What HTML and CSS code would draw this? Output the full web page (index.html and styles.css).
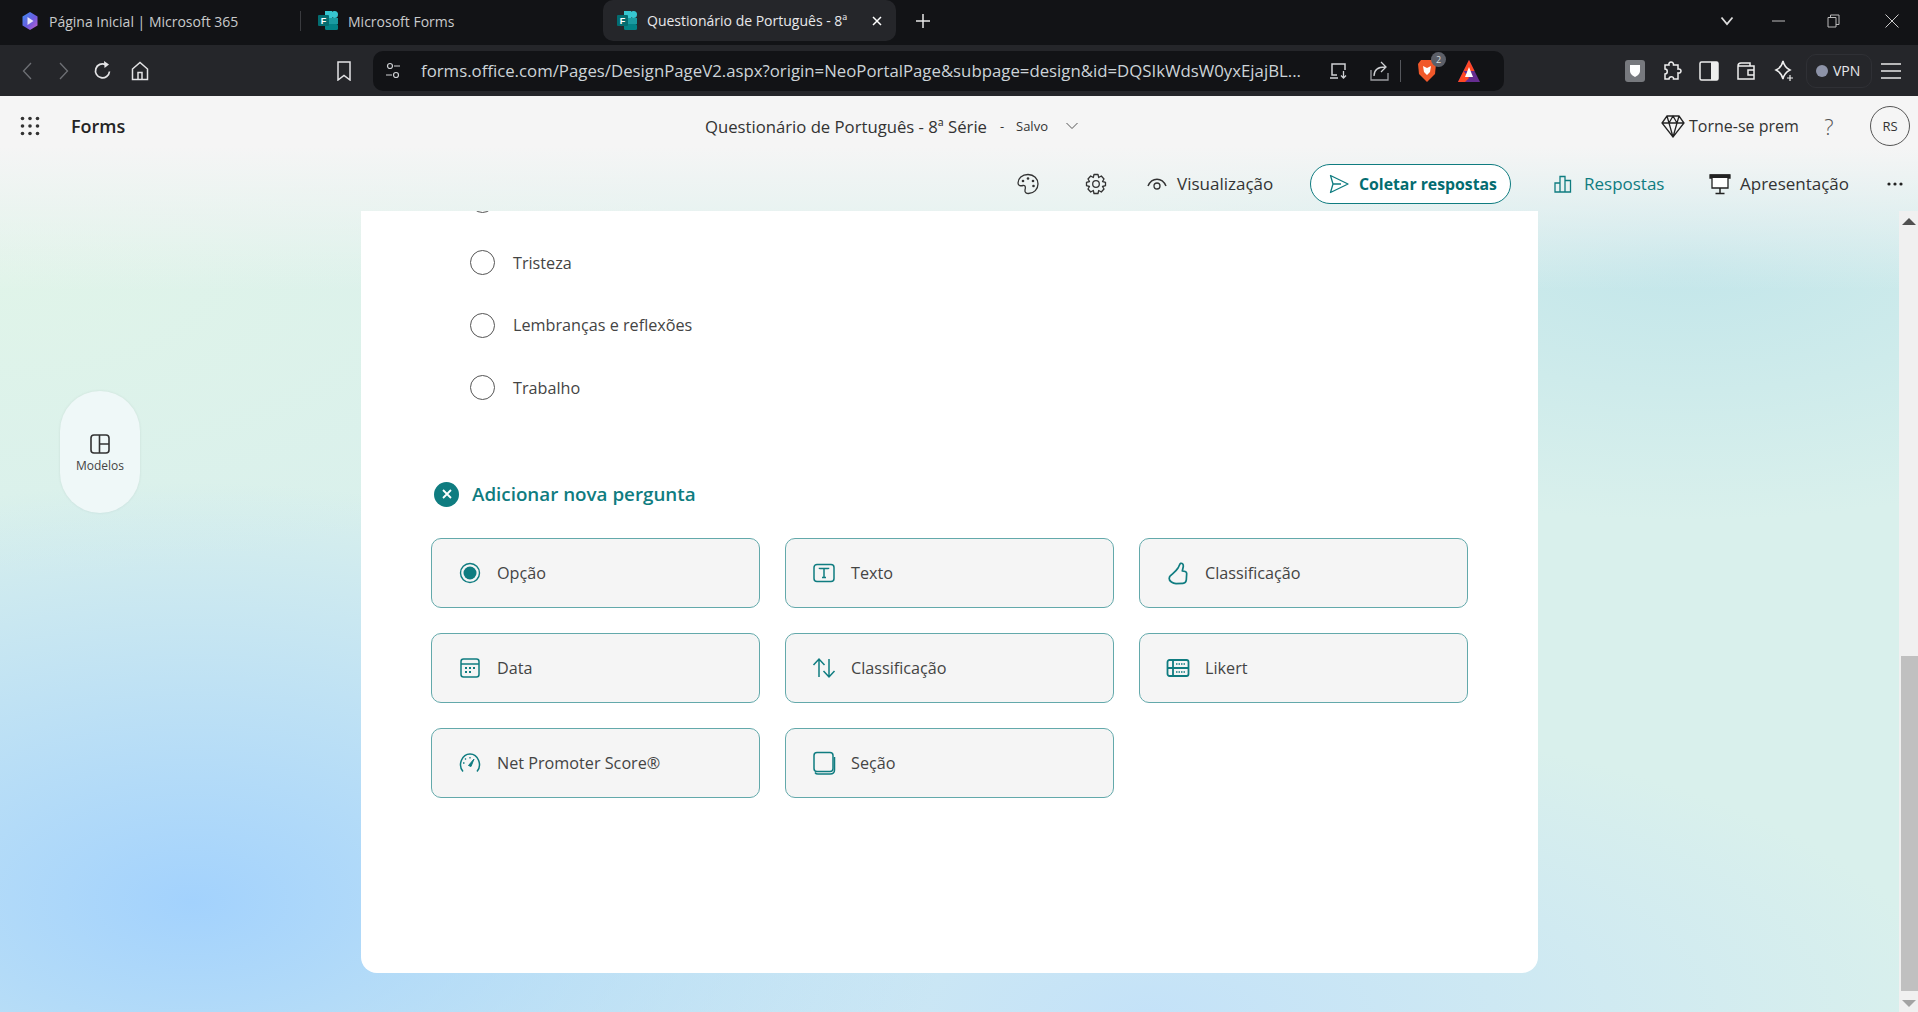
FILE: index.html
```html
<!DOCTYPE html>
<html lang="pt-BR">
<head>
  <meta charset="UTF-8">
  <title>Questionário de Português - 8ª Série</title>
  <link rel="stylesheet" href="styles.css">
</head>
<body>
  <!-- Tabs -->
  <div class="tabstrip">
    <div class="tab tab-first">
      <svg width="18" height="20" viewBox="0 0 18 20"><defs><linearGradient id="m365" x1="0" y1="0" x2="1" y2="1"><stop offset="0" stop-color="#3f8cf0"/><stop offset="0.55" stop-color="#6a5be0"/><stop offset="1" stop-color="#c85fc8"/></linearGradient></defs><path d="M9 1 16.500 5.500V14.500L9 19 1.500 14.500V5.500Z" fill="url(#m365)"/><path d="M6.500 6 12.500 10 6.500 14Z" fill="#e8e4f8"/></svg>
      <span>Página Inicial | Microsoft 365</span>
    </div>
    <div class="tab-sep"></div>
    <div class="tab tab-second">
      <svg width="20" height="20" viewBox="0 0 20 20">
        <rect x="7" y="0" width="7" height="7" fill="#37c6d0"/><circle cx="16.500" cy="3.500" r="3.500" fill="#37c6d0"/><rect x="7" y="7" width="13" height="6" fill="#1a9ba1"/><rect x="7" y="13" width="13" height="6" rx="1.500" fill="#038387"/><rect x="0" y="4" width="11" height="11" rx="1" fill="#036c70"/>
        <text x="5.500" y="13" font-size="9" font-family="Liberation Sans" font-weight="700" text-anchor="middle" fill="#fff">F</text>
      </svg>
      <span>Microsoft Forms</span>
    </div>
    <div class="tab tab-active">
      <svg width="20" height="20" viewBox="0 0 20 20">
        <rect x="7" y="0" width="7" height="7" fill="#37c6d0"/><circle cx="16.500" cy="3.500" r="3.500" fill="#37c6d0"/><rect x="7" y="7" width="13" height="6" fill="#1a9ba1"/><rect x="7" y="13" width="13" height="6" rx="1.500" fill="#038387"/><rect x="0" y="4" width="11" height="11" rx="1" fill="#036c70"/>
        <text x="5.500" y="13" font-size="9" font-family="Liberation Sans" font-weight="700" text-anchor="middle" fill="#fff">F</text>
      </svg>
      <span class="tab-title">Questionário de Português - 8ª</span>
      <svg class="tab-close" width="10" height="10" viewBox="0 0 10 10"><path d="M1 1 9 9M9 1 1 9" stroke="#fff" stroke-width="1.500"/></svg>
    </div>
    <svg class="tab-new" width="14" height="14" viewBox="0 0 14 14"><path d="M7 0V14M0 7H14" stroke="#e8e8e8" stroke-width="1.500"/></svg>
    <div class="win-controls">
      <svg class="win-list" width="14" height="10" viewBox="0 0 14 10"><path d="M1.500 1.500 7 8 12.500 1.500" fill="none" stroke="#ddd" stroke-width="1.800"/></svg>
      <svg class="win-min" width="13" height="2" viewBox="0 0 13 2"><path d="M0 1H13" stroke="#bbb" stroke-width="1"/></svg>
      <svg class="win-max" width="13" height="14" viewBox="0 0 13 14"><path d="M1 3.500H9V13H1ZM3.500 3.500V1H12V10.500H9" fill="none" stroke="#bbb"/></svg>
      <svg class="win-close" width="14" height="14" viewBox="0 0 14 14"><path d="M.5.500 13.500 13.500M13.500.500 .5 13.500" stroke="#ccc"/></svg>
    </div>
  </div>

  <!-- Toolbar -->
  <div class="toolbar">
    <svg class="tb-back" width="10" height="18" viewBox="0 0 10 18"><path d="M9 1 1.500 9 9 17" fill="none" stroke="#6e7075" stroke-width="1.300"/></svg>
    <svg class="tb-forward" width="10" height="18" viewBox="0 0 10 18"><path d="M1 1 8.500 9 1 17" fill="none" stroke="#6e7075" stroke-width="1.300"/></svg>
    <svg class="tb-reload" width="20" height="20" viewBox="0 0 20 20"><path d="M16.500 10.500A7 7 0 1 1 12.500 3.500" fill="none" stroke="#e4e4e6" stroke-width="1.700"/><path d="M11 0 16 3.500 11.500 7Z" fill="#e4e4e6"/></svg>
    <svg class="tb-home" width="18" height="20" viewBox="0 0 18 20"><path d="M1.500 8 9 1.500 16.500 8V18.500H1.500ZM7 18.500V11.500H11V18.500" fill="none" stroke="#e4e4e6" stroke-width="1.500"/></svg>
    <svg class="tb-bookmark" width="14" height="20" viewBox="0 0 14 20"><path d="M1 1H13V19L7 14.500 1 19Z" fill="none" stroke="#e4e4e6" stroke-width="1.500"/></svg>
    <div class="addressbar">
      <svg class="addr-tune" width="14" height="18" viewBox="0 0 14 18"><g fill="none" stroke="#cfd1d4" stroke-width="1.200"><circle cx="4" cy="4" r="2.500"/><path d="M8 4H14M0 13H6"/><circle cx="10" cy="13" r="2.500"/></g></svg>
      <span class="url">forms.office.com/Pages/DesignPageV2.aspx?origin=NeoPortalPage&amp;subpage=design&amp;id=DQSIkWdsW0yxEjajBL...</span>
      <svg class="addr-device" width="20" height="20" viewBox="0 0 20 20"><path d="M8 14H3V3H16V9M1 17H9" fill="none" stroke="#cfd1d4" stroke-width="1.500"/><path d="M14.500 10V17M12 14.500 14.500 17 17 14.500" fill="none" stroke="#cfd1d4" stroke-width="1.300"/></svg>
      <svg class="addr-share" width="20" height="22" viewBox="0 0 20 22"><path d="M1 10V20H18V13" fill="none" stroke="#9a9ca0" stroke-width="1.300"/><path d="M4 16C4 10 8 7 15 7M11 2 16 7 11 12" fill="none" stroke="#cfd1d4" stroke-width="1.300"/></svg>
      <div class="addr-sep"></div>
      <div class="brave">
        <svg width="20" height="24" viewBox="0 0 20 24"><path d="M4 1H16L19 5 18 15 10 23 2 15 1 5Z" fill="#f1582a"/><path d="M6 7 10 9 14 7 13 13 10 16 7 13Z" fill="#fff"/></svg>
        <span class="brave-badge">2</span>
      </div>
      <svg class="bat" width="24" height="24" viewBox="0 0 24 24"><path d="M12 1 23 23H1Z" fill="#662d91"/><path d="M12 1 17.500 12H6.500Z" fill="#ff4724"/><path d="M1 23 6.500 12 12 19 8 23Z" fill="#ff4724"/><path d="M12 8 16 18H8Z" fill="#fff"/></svg>
    </div>
    <div class="ext-shield"><svg width="12" height="14" viewBox="0 0 12 14"><path d="M1 1H11V7C11 10 8 12 6 13 4 12 1 10 1 7Z" fill="#fff"/></svg></div>
    <svg class="ext-puzzle" width="20" height="22" viewBox="0 0 20 22"><path d="M3 5H7C6 1 12 1 11.500 5H16V9C20 8 20 14 16 13V19H11.500C12 16 7 16 7 19H3V14C6 14 6 9 3 9Z" fill="none" stroke="#eee" stroke-width="1.500"/></svg>
    <svg class="ext-panel" width="20" height="20" viewBox="0 0 20 20"><rect x="1" y="1" width="18" height="18" rx="1.500" fill="none" stroke="#eee" stroke-width="1.500"/><rect x="12" y="1" width="7" height="18" fill="#eee"/></svg>
    <svg class="ext-wallet" width="20" height="20" viewBox="0 0 20 20"><path d="M2 5C2 2 4 2 5 2H14V5M2 5V18H18V5H2" fill="none" stroke="#eee" stroke-width="1.500"/><path d="M18 9H12V14H18" fill="none" stroke="#eee" stroke-width="1.500"/></svg>
    <svg class="ext-star" width="20" height="22" viewBox="0 0 20 22"><path d="M9 1C10 6 12 8 16 10 12 12 10 14 9 19 8 14 6 12 2 10 6 8 8 6 9 1Z" fill="none" stroke="#eee" stroke-width="1.500"/><path d="M16 15V21M13 18H19" stroke="#eee" stroke-width="1.200"/></svg>
    <div class="vpn"><span class="vpn-dot"></span><span>VPN</span></div>
    <svg class="tb-menu" width="20" height="16" viewBox="0 0 20 16"><path d="M0 1H20M0 8H20M0 15H20" stroke="#e8e8e8" stroke-width="1.500"/></svg>
  </div>

  <div class="page">
    <header class="topbar">
      <svg class="waffle" width="20" height="20" viewBox="0 0 20 20"><g fill="#333"><circle cx="2.500" cy="2.500" r="1.800"/><circle cx="10" cy="2.500" r="1.800"/><circle cx="17.500" cy="2.500" r="1.800"/><circle cx="2.500" cy="10" r="1.800"/><circle cx="10" cy="10" r="1.800"/><circle cx="17.500" cy="10" r="1.800"/><circle cx="2.500" cy="17.500" r="1.800"/><circle cx="10" cy="17.500" r="1.800"/><circle cx="17.500" cy="17.500" r="1.800"/></g></svg>
      <div class="brand">Forms</div>
      <div class="doc-title">Questionário de Português - 8ª Série</div>
      <div class="doc-dash">-</div>
      <div class="doc-saved">Salvo</div>
      <svg class="doc-chevron" width="12" height="8" viewBox="0 0 12 8"><path d="M.5 1 6 6.500 11.500 1" fill="none" stroke="#555" stroke-width="1"/></svg>
      <svg class="premium-icon" width="24" height="24" viewBox="0 0 24 24"><path d="M6 2H18L23 9 12 23 1 9ZM1 9H23M8 9 12 23 16 9 12 2 8 9M6 2 8 9M18 2 16 9" fill="none" stroke="#222" stroke-width="1.300"/></svg>
      <div class="premium-text">Torne-se prem</div>
      <div class="help">?</div>
      <div class="avatar">RS</div>
    </header>

    <nav class="commands">
      <svg class="cmd-palette" width="22" height="22" viewBox="0 0 22 22"><path d="M11 1.500C5 1.500 1 5.500 1 10C1 13 4 13 6 12.500 9 12 8.500 15 8 17 7.500 19.500 9.500 20.500 11.500 20.500 17 20.500 21 16 21 11 21 5.500 17 1.500 11 1.500Z" fill="none" stroke="#333" stroke-width="1.300"/><g fill="#333"><circle cx="6" cy="8" r="1.300"/><circle cx="11" cy="5.500" r="1.300"/><circle cx="16" cy="8" r="1.300"/><circle cx="16.500" cy="13" r="1.300"/></g></svg>
      <svg class="cmd-gear" width="22" height="22" viewBox="0 0 22 22"><path d="M9 1.500H13L13.700 4.500 16.300 3 19 6 17.500 8.500 20.500 9.300V12.700L17.500 13.500 19 16 16.300 19 13.700 17.500 13 20.500H9L8.300 17.500 5.700 19 3 16 4.500 13.500 1.500 12.700V9.300L4.500 8.500 3 6 5.700 3 8.300 4.500Z" fill="none" stroke="#333" stroke-width="1.300" stroke-linejoin="round"/><circle cx="11" cy="11" r="3.300" fill="none" stroke="#333" stroke-width="1.300"/></svg>
      <svg class="cmd-eye" width="20" height="14" viewBox="0 0 20 14"><path d="M1 9C5 0 15 0 19 9" fill="none" stroke="#333" stroke-width="1.500"/><circle cx="10" cy="9" r="3" fill="none" stroke="#333" stroke-width="1.300"/></svg>
      <span class="cmd-preview">Visualização</span>
      <button class="collect">
        <svg width="20" height="20" viewBox="0 0 20 20"><path d="M1.500 1.500 19 10 1.500 18.500 4 10ZM4 10H12" fill="none" stroke="#0f7c80" stroke-width="1.300" stroke-linejoin="round"/></svg>
        <span>Coletar respostas</span>
      </button>
      <svg class="cmd-chart" width="18" height="18" viewBox="0 0 18 18"><path d="M1 8H6V17H1ZM6 1.500H11V17H6ZM11 5.500H16.500V17H11Z" fill="none" stroke="#0f7c80" stroke-width="1.300"/></svg>
      <span class="cmd-answers">Respostas</span>
      <svg class="cmd-present" width="22" height="22" viewBox="0 0 22 22"><path d="M1 2H21V5H19V15H3V5H1Z" fill="#fff" stroke="#222" stroke-width="1.300"/><rect x="1" y="1.500" width="20" height="3.500" fill="#222"/><path d="M11 15V20M6.500 20.500H15.500" stroke="#222" stroke-width="1.500"/></svg>
      <span class="cmd-presentation">Apresentação</span>
      <svg class="cmd-more" width="16" height="4" viewBox="0 0 16 4"><g fill="#222"><circle cx="2" cy="2" r="1.600"/><circle cx="8" cy="2" r="1.600"/><circle cx="14" cy="2" r="1.600"/></g></svg>
    </nav>

    <div class="content">
      <aside class="rail">
        <svg width="20" height="20" viewBox="0 0 20 20"><rect x="1" y="1" width="18" height="18" rx="3" fill="none" stroke="#333" stroke-width="1.600"/><path d="M9.500 1V19M9.500 10H19" stroke="#333" stroke-width="1.600"/></svg>
        <span>Modelos</span>
      </aside>

      <main class="card">
        <ul class="options">
          <li><span class="radio"></span></li>
          <li><span class="radio"></span><span>Tristeza</span></li>
          <li><span class="radio"></span><span>Lembranças e reflexões</span></li>
          <li><span class="radio"></span><span>Trabalho</span></li>
        </ul>

        <div class="add-head">
          <span class="add-close"><svg width="10" height="10" viewBox="0 0 10 10"><path d="M1 1 9 9M9 1 1 9" stroke="#fff" stroke-width="1.800"/></svg></span>
          <span>Adicionar nova pergunta</span>
        </div>

        <div class="types">
          <div class="type">
            <svg width="24" height="24" viewBox="0 0 24 24"><circle cx="12" cy="12" r="9.500" fill="none" stroke="#0f7c80" stroke-width="1.400"/><circle cx="12" cy="12" r="6.500" fill="#0f7c80"/></svg>
            <span>Opção</span>
          </div>
          <div class="type">
            <svg width="24" height="24" viewBox="0 0 24 24"><rect x="2" y="3.500" width="20" height="17" rx="3" fill="none" stroke="#0f7c80" stroke-width="1.500"/><path d="M7.500 8V7.500H16.500V8M12 7.500V16.500M10 16.500H14" fill="none" stroke="#0f7c80" stroke-width="1.500"/></svg>
            <span>Texto</span>
          </div>
          <div class="type">
            <svg width="24" height="24" viewBox="0 0 24 24"><path d="M3.700 15.500C6 13 10 10.500 12 7 13 5.500 13.500 3 14.700 2.300 16.500 2 17.500 3.500 17.300 5.500L16.300 10C18 10 20.500 10.500 20.700 12.500L20.300 19C20 21.500 19 22.200 17 22.300L10 22.700C7 22.600 3 20 3.200 17.500Z" fill="none" stroke="#0f7c80" stroke-width="1.700" stroke-linejoin="round"/></svg>
            <span>Classificação</span>
          </div>
          <div class="type">
            <svg width="24" height="24" viewBox="0 0 24 24"><rect x="3" y="3" width="18" height="18" rx="2.500" fill="none" stroke="#0f7c80" stroke-width="1.500"/><path d="M3 8H21" stroke="#0f7c80" stroke-width="1.500"/><g fill="#0f7c80"><rect x="7" y="11" width="2" height="2"/><rect x="11" y="11" width="2" height="2"/><rect x="15" y="11" width="2" height="2"/><rect x="7" y="15" width="2" height="2"/><rect x="11" y="15" width="2" height="2"/></g></svg>
            <span>Data</span>
          </div>
          <div class="type">
            <svg width="24" height="24" viewBox="0 0 24 24"><path d="M7 21V3M1.500 9 7 3 12.500 9M17 3V21M11.500 15 17 21 22.500 15" fill="none" stroke="#0f7c80" stroke-width="1.500"/></svg>
            <span>Classificação</span>
          </div>
          <div class="type">
            <svg width="24" height="24" viewBox="0 0 24 24"><rect x="1.500" y="4" width="21" height="16" rx="2" fill="none" stroke="#0f7c80" stroke-width="1.800"/><path d="M1.500 12H22.500M7 4V20" stroke="#0f7c80" stroke-width="1.800"/><path d="M10 8H20M10 16H20" stroke="#0f7c80" stroke-width="1.500" stroke-dasharray="1.500 1"/></svg>
            <span>Likert</span>
          </div>
          <div class="type">
            <svg width="24" height="24" viewBox="0 0 24 24"><path d="M5 20.500C-.5 14 4 3 12 3 20 3 24.500 14 19 20.500" fill="none" stroke="#0f7c80" stroke-width="1.500"/><path d="M10.500 14.500 16 8 13 15.500Z" fill="#0f7c80" stroke="#0f7c80"/><path d="M5 12H6.500M12 6V7.500M7 7.500 8 8.500" stroke="#0f7c80" stroke-width="1.300"/></svg>
            <span>Net Promoter Score®</span>
          </div>
          <div class="type">
            <svg width="24" height="24" viewBox="0 0 24 24"><rect x="2" y="1.500" width="19" height="19" rx="3" fill="none" stroke="#0f7c80" stroke-width="1.500"/><path d="M3 21.500C4 23 5 23 6 23H18C21 23 22.500 21.500 22.500 19V6" fill="none" stroke="#0f7c80" stroke-width="1.500"/></svg>
            <span>Seção</span>
          </div>
        </div>
      </main>

      <div class="scrollbar">
        <svg width="14" height="7" viewBox="0 0 14 7"><path d="M7 0 14 7H0Z" fill="#505050"/></svg>
        <div class="scroll-thumb"></div>
        <svg width="14" height="7" viewBox="0 0 14 7"><path d="M0 0H14L7 7Z" fill="#a3a3a3"/></svg>
      </div>
    </div>
  </div>
</body>
</html>
```

FILE: styles.css
```css
* {
  box-sizing: border-box;
}
body {
  margin: 0;
  height: 100vh;
  overflow: hidden;
  display: flex;
  flex-direction: column;
  font-family: "Open Sans", "Noto Sans", Arial, sans-serif;
  font-size: 16px;
  color: #444;
}

/* browser tabs */
.tabstrip {
  height: 45px;
  flex: none;
  display: flex;
  align-items: center;
  padding-bottom: 3px;
  background-color: #121316;
  color: #c9cacc;
  font-size: 14px;
}
.tab {
  display: flex;
  align-items: center;
  white-space: nowrap;
  gap: 10px;
}
.tab-first {
  margin-left: 21px;
  width: 279px;
}
.tab-sep {
  width: 1px;
  height: 20px;
  background-color: #3a3b3f;
}
.tab-second {
  margin-left: 17px;
  width: 285px;
}
.tab-active {
  height: 41px;
  width: 293px;
  align-self: flex-start;
  padding: 0 12px 0 14px;
  background-color: #25262a;
  border-radius: 10px;
  color: #e8e8ea;
}
.tab-title {
  width: 206px;
  overflow: hidden;
}
.tab-close {
  margin-left: 9px;
}
.tab-new {
  margin-left: 20px;
}
.win-controls {
  margin-left: auto;
  display: flex;
  align-items: center;
  padding-right: 19px;
}
.win-min {
  margin-left: 38px;
}
.win-max {
  margin-left: 42px;
}
.win-close {
  margin-left: 45px;
}

/* browser toolbar */
.toolbar {
  height: 51px;
  flex: none;
  display: flex;
  align-items: center;
  background-color: #25262a;
}
.tb-back {
  margin-left: 22px;
}
.tb-forward {
  margin-left: 27px;
}
.tb-reload {
  margin-left: 24px;
}
.tb-home {
  margin-left: 18px;
}
.tb-bookmark {
  margin-left: 188px;
}
.addressbar {
  margin-left: 22px;
  width: 1131px;
  height: 40px;
  display: flex;
  align-items: center;
  background-color: #121316;
  border-radius: 10px;
  color: #cdd3d8;
}
.addr-tune {
  margin-left: 13px;
}
.url {
  margin-left: 21px;
  width: 889px;
  font-size: 16.8px;
  white-space: nowrap;
}
.addr-device {
  margin-left: 19px;
}
.addr-share {
  margin-left: 21px;
}
.addr-sep {
  width: 1px;
  height: 22px;
  margin-left: 10px;
  background-color: #55575c;
}
.brave {
  position: relative;
  margin-left: 16px;
  height: 24px;
}
.brave-badge {
  position: absolute;
  top: -7px;
  right: -9px;
  width: 15px;
  height: 15px;
  border-radius: 50%;
  background-color: #5c5f68;
  color: #ddd;
  font-size: 9px;
  line-height: 15px;
  text-align: center;
}
.bat {
  margin-left: 20px;
}
.ext-shield {
  margin-left: 121px;
  width: 20px;
  height: 22px;
  display: flex;
  align-items: center;
  justify-content: center;
  border-radius: 3px;
  background-color: #77797e;
}
.ext-puzzle {
  margin-left: 17px;
}
.ext-panel {
  margin-left: 17px;
}
.ext-wallet {
  margin-left: 17px;
}
.ext-star {
  margin-left: 18px;
}
.vpn {
  margin-left: 12px;
  width: 66px;
  height: 34px;
  display: flex;
  align-items: center;
  gap: 5px;
  padding-left: 9px;
  border: 1px solid #2f3035;
  border-radius: 10px;
  color: #e8e8ea;
  font-size: 14px;
}
.vpn-dot {
  width: 12px;
  height: 12px;
  border-radius: 50%;
  background-color: #8d93a8;
}
.tb-menu {
  margin-left: 9px;
}

/* forms page */
.page {
  flex: 1;
  min-height: 0;
  display: flex;
  flex-direction: column;
  background-color: #d9f0ec;
  background-image:
    linear-gradient(#f5f5f5 0, #f5f5f5 50px, rgba(245, 245, 245, 0) 195px),
    radial-gradient(ellipse 760px 420px at 10% 88%, #a3d2fd 0, rgba(163, 210, 253, 0) 100%),
    radial-gradient(ellipse 600px 260px at 88% 18%, #c3e6ea 0, rgba(195, 230, 234, 0) 100%),
    radial-gradient(ellipse 700px 300px at 0 20%, #e0f4e9 0, rgba(224, 244, 233, 0) 100%),
    radial-gradient(ellipse 800px 300px at 60% 100%, #c4e2f8 0, rgba(196, 226, 248, 0) 100%);
}
.topbar {
  height: 60px;
  flex: none;
  display: flex;
  align-items: center;
  color: #333;
}
.waffle {
  margin-left: 20px;
}
.brand {
  margin-left: 31px;
  width: 634px;
  font-size: 18px;
  font-weight: 600;
  color: #242424;
}
.doc-title {
  width: 290px;
  font-size: 16.7px;
  white-space: nowrap;
}
.doc-dash {
  margin-left: 5px;
  width: 16px;
  font-size: 13px;
}
.doc-saved {
  width: 50px;
  font-size: 13px;
}
.premium-icon {
  margin-left: 583px;
}
.premium-text {
  margin-left: 4px;
  width: 110px;
  white-space: nowrap;
  font-size: 16px;
}
.help {
  margin-left: 21px;
  width: 18px;
  font-size: 22px;
  font-weight: 300;
  color: #555;
  text-align: center;
}
.avatar {
  margin-left: 32px;
  width: 40px;
  height: 40px;
  display: flex;
  align-items: center;
  justify-content: center;
  border: 1px solid #555;
  border-radius: 50%;
  font-size: 13px;
}
.commands {
  height: 55px;
  flex: none;
  display: flex;
  align-items: center;
  color: #333;
  font-size: 17px;
  font-weight: 500;
  white-space: nowrap;
}
.cmd-palette {
  margin-left: 1017px;
}
.cmd-gear {
  margin-left: 46px;
}
.cmd-eye {
  margin-left: 40px;
}
.cmd-preview {
  margin-left: 10px;
  width: 133px;
}
.collect {
  height: 40px;
  width: 201px;
  display: flex;
  align-items: center;
  gap: 10px;
  padding: 0 0 0 18px;
  background-color: #fff;
  border: 1px solid #0f7c80;
  border-radius: 20px;
  color: #036c70;
  font: inherit;
  font-weight: 700;
  font-size: 15.8px;
}
.cmd-chart {
  margin-left: 43px;
}
.cmd-answers {
  margin-left: 12px;
  width: 125px;
  color: #0f7c80;
}
.cmd-present {
  flex: none;
}
.cmd-presentation {
  margin-left: 9px;
  width: 147px;
}

/* content area */
.content {
  flex: 1;
  min-height: 0;
  display: flex;
  align-items: flex-start;
}
.rail {
  margin: 180px 0 0 60px;
  width: 80px;
  height: 122px;
  flex: none;
  display: flex;
  flex-direction: column;
  align-items: center;
  justify-content: center;
  gap: 3px;
  padding-top: 4px;
  background-color: #eff8f8;
  border-radius: 40px;
  box-shadow: 0 0 3px rgba(0, 0, 0, 0.08);
  font-size: 12px;
}
.card {
  margin-left: 221px;
  width: 1177px;
  height: 762px;
  flex: none;
  overflow: hidden;
  padding-left: 70px;
  background-color: #fff;
  border-radius: 0 0 16px 16px;
  font-size: 16.2px;
}
.options {
  list-style: none;
  margin: -42px 0 0;
  padding: 0 0 0 39px;
}
.options li {
  height: 62.5px;
  display: flex;
  align-items: center;
  gap: 18px;
}
.radio {
  width: 25px;
  height: 25px;
  border: 1.5px solid #555;
  border-radius: 50%;
}
.add-head {
  margin-top: 60px;
  height: 30px;
  display: flex;
  align-items: center;
  gap: 13px;
  padding-left: 3px;
  font-size: 18.8px;
  font-weight: 600;
  color: #0f7c80;
}
.add-close {
  width: 25px;
  height: 25px;
  display: flex;
  align-items: center;
  justify-content: center;
  border-radius: 50%;
  background-color: #0f7c80;
}
.types {
  margin-top: 29px;
  display: grid;
  grid-template-columns: repeat(3, 329px);
  grid-auto-rows: 70px;
  gap: 25px;
}
.type {
  display: flex;
  align-items: center;
  gap: 15px;
  padding-left: 26px;
  background-color: #f5f5f5;
  border: 1px solid #63a9ab;
  border-radius: 10px;
}
.scrollbar {
  margin-left: auto;
  width: 19px;
  height: 100%;
  flex: none;
  display: flex;
  flex-direction: column;
  align-items: center;
  padding: 7px 0 5px;
  background-color: #f0f0f0;
}
.scroll-thumb {
  margin-top: auto;
  margin-bottom: 9px;
  margin-left: 2px;
  width: 17px;
  height: 335px;
  background-color: #c0c0c0;
}
```
